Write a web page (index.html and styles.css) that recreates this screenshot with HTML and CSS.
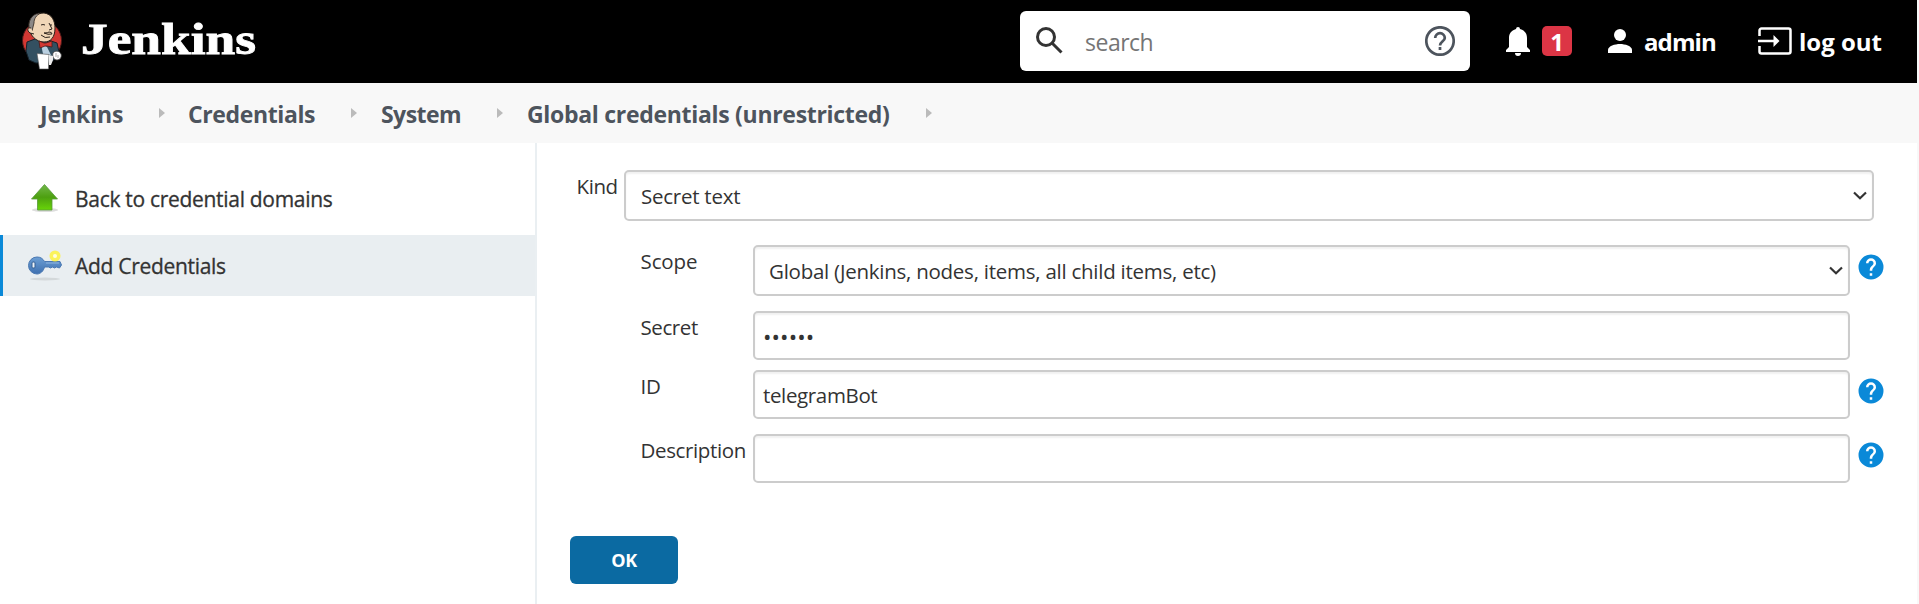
FILE: index.html
```html
<!DOCTYPE html>
<html lang="en">
<head>
<meta charset="utf-8">
<title>Jenkins - Add Credentials</title>
<link rel="stylesheet" href="styles.css">
</head>
<body>
<svg class="defs" aria-hidden="true">
  <symbol id="help" viewBox="0 0 24 24"><path d="M12 2a10 10 0 1 0 0 20 10 10 0 0 0 0-20zm1 17h-2v-2h2zm2.070-7.750l-.9.920C13.450 12.900 13 13.500 13 15h-2v-.5c0-1.100.45-2.100 1.170-2.830l1.240-1.260c.37-.36.590-.86.590-1.410a2 2 0 1 0-4 0H8a4 4 0 1 1 8 0c0 .88-.36 1.680-.93 2.250z"/></symbol>
</svg>
<header class="header">
  <a class="brand">
    <svg class="brand-mark" viewBox="0 0 44 60">
      <circle cx="22" cy="29.500" r="19.500" fill="#d33833" stroke="#4a1a18"/>
      <path d="M7 31l8-3 13 1 9 3 2 9-4 7-4 3-15 1-7-3-3-9z" fill="#335061" stroke="#15222b"/>
      <path d="M9 15C8 7 16 2 24 2c8 1 11 8 11 15 0 9-4 14-11 14-8 0-15-7-15-16z" fill="#f0d6b7" stroke="#2a211b"/>
      <path d="M9 17C8 7 14 2 21 2c-5 2-7 6-7 10l-1 4-1 4z" fill="#8b8886" stroke="#2a211b" stroke-width=".8"/>
      <path d="M11 17c-4-1-4 3-1 5l4 1" fill="#f0d6b7" stroke="#2a211b"/>
      <path d="M21 14q2-1 4 0M30 14l2 0M29 12l3 6-3 1M24 22q4 0 5-1 3 0 3 2-4 1-8-1M21 24q4 4 9 2" fill="none" stroke="#2a211b" stroke-width="1"/>
      <path d="M21 33l6 3 4 8-8-1z" fill="#b9cfe0"/>
      <path d="M19 30l5 2 2 0 6-2 0 6-5-1-2 0-5 2z" fill="#d33833" stroke="#4a1a18" stroke-width=".8"/>
      <path d="M17 42.500l12 1-.5 14.500-9 0z" fill="#fff" stroke="#555" stroke-width=".6"/>
      <path d="M33 42c2-3 7-2 8 1s-1 6-4 6-5-3-4-7z" fill="#fff" stroke="#444" stroke-width=".8"/>
      <path d="M29 44l4 1 0 4-2 5-2 0z" fill="#eee"/><path d="M36 42v4M38 44v3" stroke="#888" fill="none" stroke-width=".7"/>
    </svg>
    <svg class="brand-name" viewBox="0 0 190 60"><text x="4" y="43" textLength="175" lengthAdjust="spacingAndGlyphs">Jenkins</text></svg>
  </a>
  <div class="search">
    <svg class="search-icon" viewBox="0 0 27 27"><circle cx="10" cy="10" r="8.500"/><path d="M16 16l9.500 9.500"/></svg>
    <span class="t search-text">search</span>
    <svg class="search-help" viewBox="0 0 30 30"><circle cx="15" cy="15" r="13.700"/><path d="M10.200 12a4.800 4.800 0 1 1 9.600 0c0 3-4.800 3.600-4.800 7.500"/><path d="M15 21v3"/></svg>
  </div>
  <svg class="bell" viewBox="0 0 24 29"><path d="M12 0a2 2 0 0 1 2 2c5 1.500 7 5 7 9v9l3 3v2H0v-2l3-3v-9c0-4 2-7.500 7-9a2 2 0 0 1 2-2zM9 26h6a3 3 0 0 1-6 0z"/></svg>
  <span class="badge">1</span>
  <svg class="person" viewBox="0 0 24 24"><circle cx="12" cy="6" r="6"/><path d="M0 24v-3c0-4 7-6 12-6s12 2 12 6v3z"/></svg>
  <span class="t user">admin</span>
  <svg class="exit" viewBox="0 0 34 28"><path class="exit-line" d="M1.500 9V3.500a2 2 0 0 1 2-2h27a2 2 0 0 1 2 2v21a2 2 0 0 1-2 2h-27a2 2 0 0 1-2-2V19M0 14h16"/><path class="exit-head" d="M15.500 8l6 6-6 6z"/></svg>
  <span class="t logout">log out</span>
</header>
<nav class="crumbs">
  <span class="t crumb c1">Jenkins</span><i class="arrow"></i>
  <span class="t crumb c2">Credentials</span><i class="arrow"></i>
  <span class="t crumb c3">System</span><i class="arrow"></i>
  <span class="t crumb c4">Global credentials (unrestricted)</span><i class="arrow"></i>
</nav>
<div class="page">
  <aside class="side">
    <a class="task">
      <svg class="task-icon" viewBox="0 0 34 34">
        <defs><linearGradient id="green" x1="0" y1="0" x2="0" y2="1"><stop offset="0" stop-color="#72b84a"/><stop offset=".5" stop-color="#4da010"/><stop offset="1" stop-color="#68d508"/></linearGradient></defs>
        <ellipse cx="17" cy="29" rx="13" ry="2" fill="#ddd"/>
        <path d="M16.500 3.500L29.500 18h-5.500v11H9.500V18H3.500z" fill="url(#green)" stroke="#58993a" stroke-width=".8"/>
      </svg>
      <span class="t task-a">Back to credential domains</span>
    </a>
    <a class="task active">
      <svg class="task-icon" viewBox="0 0 34 34">
        <defs><linearGradient id="blue" x1="0" y1="0" x2="0" y2="1"><stop offset="0" stop-color="#6d9fd4"/><stop offset="1" stop-color="#3e70b0"/></linearGradient></defs>
        <ellipse cx="17" cy="32" rx="15" ry="1.500" fill="#d3d8da"/>
        <path d="M9 10c4 0 6 2 7.500 4.500H32l1.500 3.500-2 3-3-1-2 1-2-1-2 1-2-1h-4c-1 4-4 7-7.500 7a8.500 8.500 0 0 1 0-17z" fill="url(#blue)" stroke="#4a78b2"/>
        <path d="M18 16h13" stroke="#8fb5df"/><rect x="4" y="15" width="3" height="6" rx="1" fill="#eef3f7" stroke="#345f93"/>
        <circle cx="27" cy="9" r="5.500" fill="#fdf34a" opacity=".9"/><circle cx="27" cy="9" r="2" fill="#fffde0"/>
      </svg>
      <span class="t task-b">Add Credentials</span>
    </a>
  </aside>
  <main class="main">
    <div class="row kind"><span class="t label l-kind">Kind</span>
      <div class="field select"><span class="t v-kind">Secret text</span><svg class="chev" viewBox="0 0 14 9"><path d="M1 1.500l6 5.700 6-5.700"/></svg></div></div>
    <div class="row scope"><span class="t label l-scope">Scope</span>
      <div class="field select"><span class="t v-scope">Global (Jenkins, nodes, items, all child items, etc)</span><svg class="chev" viewBox="0 0 14 9"><path d="M1 1.500l6 5.700 6-5.700"/></svg></div><svg class="help"><use href="#help"/></svg></div>
    <div class="row secret"><span class="t label l-secret">Secret</span>
      <div class="field"><span class="t dots">••••••</span></div></div>
    <div class="row id"><span class="t label l-id">ID</span>
      <div class="field name"><span class="t v-id">telegramBot</span></div><svg class="help"><use href="#help"/></svg></div>
    <div class="row desc"><span class="t label l-desc">Description</span>
      <div class="field"></div><svg class="help"><use href="#help"/></svg></div>
    <button class="ok">OK</button>
  </main>
</div>
</body>
</html>
```
FILE: styles.css
```css
* { box-sizing: border-box; }
body { margin: 0; width: 1919px; height: 604px; overflow: hidden; background: #fff; color: #333; font: 20.5px/30px "Open Sans", "Noto Sans", sans-serif; border-right: 2px solid #f8f8f8; }
svg { display: block; flex: none; }
.defs { position: absolute; width: 0; height: 0; }
.t { white-space: nowrap; flex: none; }
.header { display: flex; align-items: flex-start; height: 83px; background: #000; color: #fff; font-size: 24px; font-weight: 700; fill: #fff; }
.brand { display: flex; width: 1020px; padding: 11px 0 0 20px; }
.brand-mark { width: 44px; height: 60px; }
.brand-name { width: 190px; height: 60px; margin-left: 13px; overflow: visible; font: 700 45px "Liberation Serif", serif; stroke: #fff; stroke-width: .9; }
.search { display: flex; width: 450px; height: 60px; margin: 11px 36px 0 0; padding-left: 16px; border-radius: 6px; background: #fff; }
.search-icon { width: 27px; height: 27px; margin-top: 16px; fill: none; stroke: #333; stroke-width: 3; }
.search-text { width: 320px; margin: 16px 0 0 22px; color: #757575; font-size: 23px; font-weight: 400; letter-spacing: -.5px; }
.search-help { width: 30px; height: 30px; margin: 15px 0 0 20px; fill: none; stroke: #4d545d; stroke-width: 2.700; }
.bell { width: 24px; height: 29px; margin-top: 27px; }
.badge { width: 30px; height: 30px; margin: 26px 36px 0 12px; border-radius: 5px; background: #dc3545; text-align: center; line-height: 32px; }
.person { width: 24px; height: 24px; margin-top: 29px; }
.user { width: 114px; margin: 27px 0 0 12px; letter-spacing: -.9px; }
.exit { width: 34px; height: 28px; margin-top: 27px; }
.exit-line { fill: none; stroke: #fff; stroke-width: 2.500; }
.logout { margin: 27px 0 0 7px; }
.crumbs { display: flex; height: 60px; padding-left: 40px; background: #f8f8f8; color: #4d545d; font-size: 23px; font-weight: 700; letter-spacing: -.3px; }
.crumb { margin-top: 16px; }
.c1 { width: 119px; letter-spacing: -.1px; }
.c2 { width: 162px; text-indent: -1px; letter-spacing: -.38px; }
.c3 { width: 116px; letter-spacing: -.55px; }
.c4 { width: 399px; }
.arrow { width: 0; height: 0; margin: 25px 24px 0 0; border: solid transparent; border-width: 5.500px 0 5.500px 6px; border-left-color: #bbb; }
.page { display: flex; height: 461px; }
.side { width: 537px; padding-top: 26px; border-right: 2px solid #eaeff2; font-size: 21px; letter-spacing: -.3px; -webkit-text-stroke: .3px #333; }
.task { display: flex; height: 61px; margin-bottom: 5px; padding: 12px 0 0 25px; border-left: 3px solid transparent; }
.task.active { border-color: #0a89d8; background: #e9eef1; }
.task .t { margin: 3px 0 0 13px; }
.task .task-b { margin-top: 4px; }
.task-icon { width: 34px; height: 34px; }
.main { flex: 1; padding: 27px 43px 0 33px; letter-spacing: -.25px; }
.row { display: flex; }
.label { width: 112px; margin-top: 1px; text-indent: -.5px; }
.field { flex: 1; height: 49px; padding: 9px 0 0 8px; border: 2px solid #ccc; border-radius: 5px; box-shadow: inset 0 2px 2px rgba(0,0,0,.06); }
.select { display: flex; height: 51px; padding: 9px 5px 0 14px; justify-content: space-between; }
.name { padding-top: 8px; }
.chev { width: 14px; height: 9px; margin-top: 10px; fill: none; stroke: #333; stroke-width: 2.200; }
.help { width: 30px; height: 30px; margin: 6px -36px 0 6px; fill: #0a89d8; }
.row:not(.kind) { padding: 0 24px 0 71px; }
.row.kind { margin-left: 7px; }
.kind .label { width: 47px; letter-spacing: -.4px; }
.scope { margin-top: 24px; }
.scope .help { margin-top: 7px; }
.secret { margin-top: 15px; }
.id { margin-top: 10px; }
.desc { margin-top: 15px; }
.l-scope { letter-spacing: -.1px; }
.l-secret { letter-spacing: -.4px; }
.v-kind { text-indent: 1px; }
.v-id, .l-desc { letter-spacing: -.36px; }
.dots { font-size: 22.5px; letter-spacing: .1px; }
.ok { width: 108px; height: 48px; margin-top: 53px; padding: 0; border: 0; border-radius: 6px; background: #0b6aa2; color: #fff; font: 700 18px/30px "Open Sans", sans-serif; letter-spacing: -.3px; }
```
